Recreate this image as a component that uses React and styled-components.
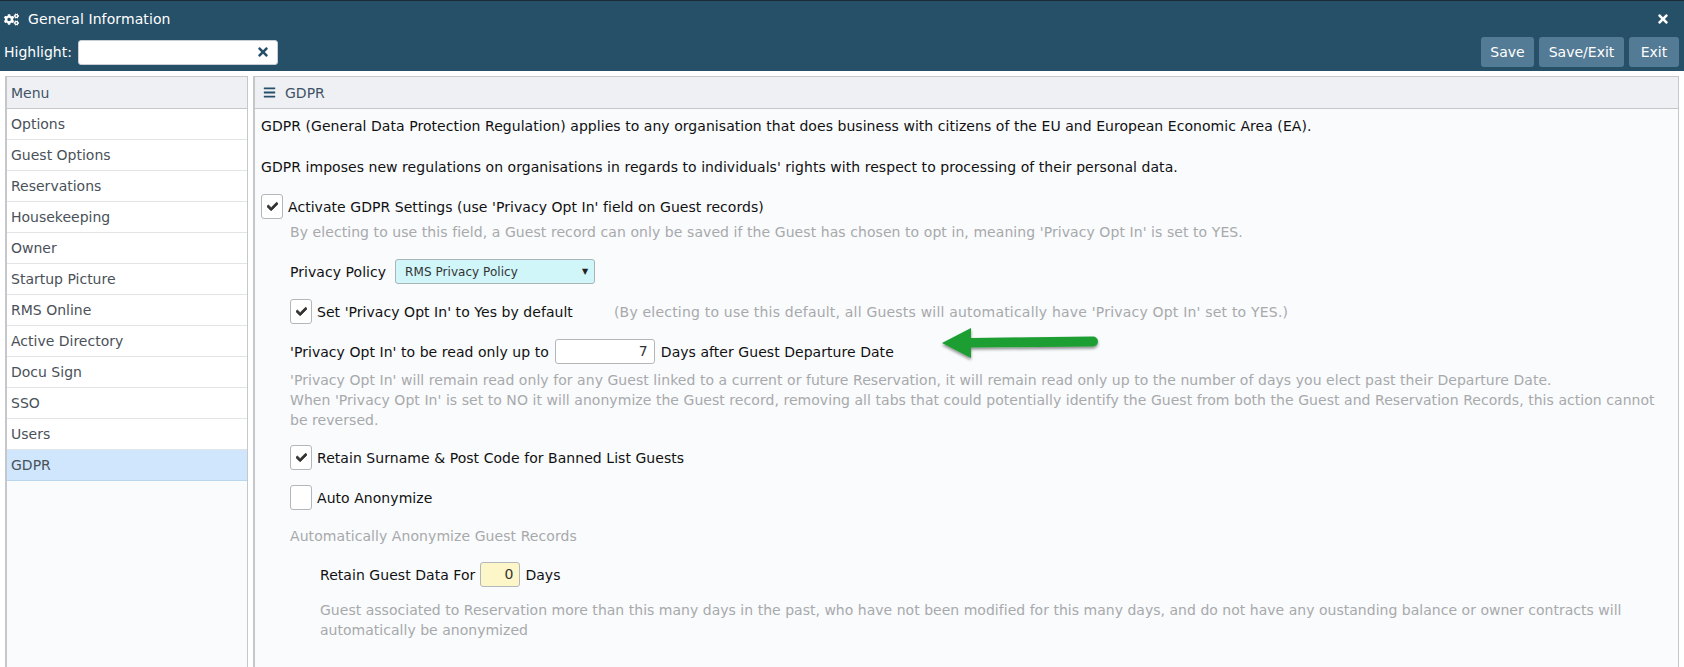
import React from 'react';
import styled, { createGlobalStyle } from 'styled-components';
import { FaCogs, FaBars, FaTimes, FaCheck } from 'react-icons/fa';

const GlobalStyle = createGlobalStyle`
  html, body {
    margin: 0;
    padding: 0;
    height: 100%;
    overflow: hidden;
    background: #fff;
    font-family: "DejaVu Sans", Verdana, sans-serif;
    font-size: 14px;
  }
`;

const Page = styled.div`
  display: flex;
  flex-direction: column;
  height: 667px;
`;

const Header = styled.header`
  height: 71px;
  flex: none;
  box-sizing: border-box;
  border-top: 1px solid #1b2b3a;
  background: #264f68;
  color: #fff;
`;

const TitleRow = styled.div`
  display: flex;
  align-items: center;
  height: 36px;
  padding: 0 14px 0 4px;
  gap: 9px;
`;

const Title = styled.div`
  flex: 1;
  letter-spacing: 0.1px;
`;

const ToolRow = styled.div`
  display: flex;
  align-items: center;
  height: 30px;
  padding: 0 5px 0 4px;
  gap: 5px;
`;

const HighlightBox = styled.div`
  display: flex;
  align-items: center;
  justify-content: flex-end;
  width: 200px;
  height: 25px;
  margin-left: 1px;
  box-sizing: border-box;
  padding-right: 7px;
  background: #fff;
  border: 1px solid #c8ced3;
  border-radius: 3px;
  color: #264f68;
`;

const Spacer = styled.div`
  flex: 1;
`;

const HeaderButton = styled.button`
  width: ${({ $w }) => $w}px;
  height: 30px;
  padding: 0;
  border: none;
  border-radius: 3px;
  background: #547b95;
  color: #fff;
  font: 14px "DejaVu Sans", Verdana, sans-serif;
`;

const Body = styled.div`
  flex: 1;
  display: flex;
  gap: 5px;
  padding: 5px 5px 0;
  min-height: 0;
`;

const Panel = styled.section`
  position: relative;
  display: flex;
  flex-direction: column;
  box-sizing: border-box;
  width: ${({ $w }) => ($w ? `${$w}px` : 'auto')};
  flex: ${({ $w }) => ($w ? 'none' : '1')};
  border: 1px solid #c5c7cb;
  border-left-width: 2px;
  border-bottom: none;
  background: #f9fbfd;
`;

const PanelHeader = styled.div`
  display: flex;
  align-items: center;
  gap: 9px;
  height: 32px;
  flex: none;
  box-sizing: border-box;
  padding: 0 0 0 ${({ $pad }) => $pad}px;
  background: #eef0f4;
  border-bottom: 1px solid #c5c7cb;
  color: #3f5366;
`;

const MenuItem = styled.div`
  display: flex;
  align-items: center;
  height: 31px;
  box-sizing: border-box;
  padding-left: 4px;
  background: ${({ $active }) => ($active ? '#cfe6fc' : '#fff')};
  border-bottom: 1px solid ${({ $active }) => ($active ? '#b9d6ec' : '#e2e4e6')};
  color: #4a5159;
`;

const Content = styled.div`
  padding: 7px 10px 0 6px;
  color: #111;
  line-height: 20px;
  letter-spacing: 0.05px;
`;

const Para = styled.p`
  margin: ${({ $top }) => $top || 0}px 0 0;
`;

const Row = styled.div`
  display: flex;
  align-items: center;
  gap: ${({ $gap }) => $gap || '5px'};
  margin: ${({ $top }) => $top || 0}px 0 0 ${({ $indent }) => $indent || 0}px;
  min-height: 25px;
`;

const CheckBox = styled.span`
  display: flex;
  align-items: center;
  justify-content: center;
  flex: none;
  width: 22px;
  height: 25px;
  box-sizing: border-box;
  background: #fff;
  border: 1px solid #b4b7ba;
  border-radius: 3px;
  color: #333;
`;

const Tick = styled(FaCheck)`
  stroke: currentColor;
  stroke-width: 40px;
`;

const Help = styled.div`
  margin: ${({ $top }) => $top || 0}px 0 0 ${({ $indent }) => $indent || 0}px;
  color: #a8a9ab;
  letter-spacing: ${({ $spacing }) => $spacing || '0.07px'};
`;

const Inline = styled.span`
  color: #a8a9ab;
  margin-left: 36px;
  letter-spacing: 0.2px;
`;

const Select = styled.div`
  display: flex;
  align-items: center;
  justify-content: space-between;
  width: 200px;
  height: 25px;
  box-sizing: border-box;
  padding: 0 6px 0 9px;
  background: #d0f6fa;
  border: 1px solid #a9b4b8;
  border-radius: 3px;
  color: #333;
  font-size: 12px;
`;

const Caret = styled.span`
  font-size: 8px;
  color: #222;
`;

const NumberBox = styled.div`
  width: ${({ $w }) => $w}px;
  height: 25px;
  box-sizing: border-box;
  padding-right: 6px;
  text-align: right;
  line-height: 23px;
  background: ${({ $bg }) => $bg || '#fff'};
  border: 1px solid #b4b7ba;
  border-radius: 3px;
  color: #333;
`;

const Arrow = styled.svg`
  position: absolute;
  left: 687px;
  top: 251px;
  overflow: visible;
`;

const menu = [
  'Options', 'Guest Options', 'Reservations', 'Housekeeping', 'Owner', 'Startup Picture',
  'RMS Online', 'Active Directory', 'Docu Sign', 'SSO', 'Users', 'GDPR',
];

export default function App() {
  return (
    <Page>
      <GlobalStyle />
      <Header>
        <TitleRow>
          <FaCogs size={15} />
          <Title>General Information</Title>
          <FaTimes size={14} />
        </TitleRow>
        <ToolRow>
          <label>Highlight:</label>
          <HighlightBox><FaTimes size={14} /></HighlightBox>
          <Spacer />
          <HeaderButton $w={53}>Save</HeaderButton>
          <HeaderButton $w={85}>Save/Exit</HeaderButton>
          <HeaderButton $w={50}>Exit</HeaderButton>
        </ToolRow>
      </Header>
      <Body>
        <Panel $w={243}>
          <PanelHeader $pad={4}>Menu</PanelHeader>
          {menu.map((item) => (
            <MenuItem key={item} $active={item === 'GDPR'}>{item}</MenuItem>
          ))}
        </Panel>
        <Panel>
          <PanelHeader $pad={8}>
            <FaBars size={13} color="#264f68" />
            GDPR
          </PanelHeader>
          <Content>
            <Para>GDPR (General Data Protection Regulation) applies to any organisation that does business with citizens of the EU and European Economic Area (EA).</Para>
            <Para $top={21}>GDPR imposes new regulations on organisations in regards to individuals' rights with respect to processing of their personal data.</Para>
            <Row $top={17}>
              <CheckBox><Tick size={11} /></CheckBox>
              Activate GDPR Settings (use 'Privacy Opt In' field on Guest records)
            </Row>
            <Help $top={3} $indent={29}>By electing to use this field, a Guest record can only be saved if the Guest has chosen to opt in, meaning 'Privacy Opt In' is set to YES.</Help>
            <Row $top={17} $indent={29} $gap="9px">
              Privacy Policy
              <Select>RMS Privacy Policy<Caret>▼</Caret></Select>
            </Row>
            <Row $top={15} $indent={29}>
              <CheckBox><Tick size={11} /></CheckBox>
              Set 'Privacy Opt In' to Yes by default
              <Inline>(By electing to use this default, all Guests will automatically have 'Privacy Opt In' set to YES.)</Inline>
            </Row>
            <Row $top={15} $indent={29} $gap="6px">
              'Privacy Opt In' to be read only up to
              <NumberBox $w={100}>7</NumberBox>
              Days after Guest Departure Date
            </Row>
            <Help $top={6} $indent={29} $spacing="0.05px">
              'Privacy Opt In' will remain read only for any Guest linked to a current or future Reservation, it will remain read only up to the number of days you elect past their Departure Date.<br />
              When 'Privacy Opt In' is set to NO it will anonymize the Guest record, removing all tabs that could potentially identify the Guest from both the Guest and Reservation Records, this action cannot be reversed.
            </Help>
            <Row $top={15} $indent={29}>
              <CheckBox><Tick size={11} /></CheckBox>
              Retain Surname &amp; Post Code for Banned List Guests
            </Row>
            <Row $top={15} $indent={29}>
              <CheckBox />
              Auto Anonymize
            </Row>
            <Help $top={16} $indent={29}>Automatically Anonymize Guest Records</Help>
            <Row $top={16} $indent={59}>
              Retain Guest Data For
              <NumberBox $w={40} $bg="#fdf6c8">0</NumberBox>
              Days
            </Row>
            <Help $top={13} $indent={59} $spacing="0.02px">Guest associated to Reservation more than this many days in the past, who have not been modified for this many days, and do not have any oustanding balance or owner contracts will automatically be anonymized</Help>
          </Content>
          <Arrow width="156" height="32" viewBox="0 0 156 32">
            <defs>
              <filter id="arrowShadow" x="-10%" y="-30%" width="120%" height="170%">
                <feDropShadow dx="0" dy="2" stdDeviation="1.5" floodColor="#000" floodOpacity="0.45" />
              </filter>
            </defs>
            <path
              d="M0 15 L29 0 L29 10 L151 8.5 A5 5 0 0 1 151 18.5 L29 19.5 L29 30 Z"
              fill="#1e9e33"
              filter="url(#arrowShadow)"
            />
          </Arrow>
        </Panel>
      </Body>
    </Page>
  );
}
